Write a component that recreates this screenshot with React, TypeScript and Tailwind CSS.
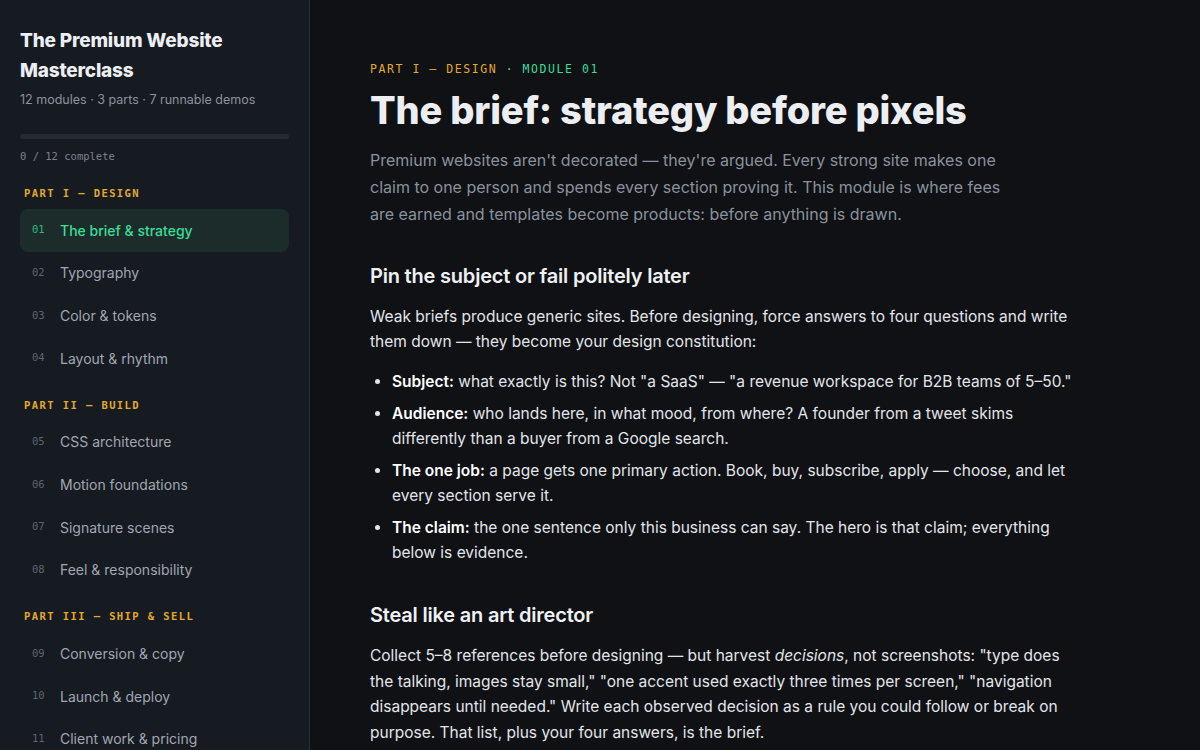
import React from "react";

const mono = "font-['DejaVu_Sans_Mono','Liberation_Mono',monospace]";
const sans = "font-['Inter','Noto_Sans',sans-serif]";

type Mod = { n: string; title: string; active?: boolean };
type Part = { label: string; mods: Mod[] };

const parts: Part[] = [
  {
    label: "PART I — DESIGN",
    mods: [
      { n: "01", title: "The brief & strategy", active: true },
      { n: "02", title: "Typography" },
      { n: "03", title: "Color & tokens" },
      { n: "04", title: "Layout & rhythm" },
    ],
  },
  {
    label: "PART II — BUILD",
    mods: [
      { n: "05", title: "CSS architecture" },
      { n: "06", title: "Motion foundations" },
      { n: "07", title: "Signature scenes" },
      { n: "08", title: "Feel & responsibility" },
    ],
  },
  {
    label: "PART III — SHIP & SELL",
    mods: [
      { n: "09", title: "Conversion & copy" },
      { n: "10", title: "Launch & deploy" },
      { n: "11", title: "Client work & pricing" },
      { n: "12", title: "Portfolio & growth" },
    ],
  },
];

function Sidebar() {
  return (
    <aside className="w-[310px] shrink-0 h-[750px] overflow-hidden bg-[#161a21] border-r border-[#2a2f37] px-5 pt-[26px]">
      <h1 className={`${sans} text-[19px] leading-[30px] font-extrabold tracking-[-0.01em] text-[#eceef2]`}>
        The Premium Website Masterclass
      </h1>
      <p className={`${sans} mt-[4px] text-[12.5px] leading-5 text-[#8d939e]`}>
        12 modules · 3 parts · 7 runnable demos
      </p>
      <div className="mt-6 h-[5px] rounded-full bg-[#252a33]" />
      <p className={`${mono} mt-[9px] text-[10.5px] leading-4 text-[#7d838e]`}>0 / 12 complete</p>
      <nav className="mt-[21px] flex flex-col">
        {parts.map((p, i) => (
          <div key={p.label} className={i === 0 ? "" : "mt-[17px]"}>
            <div className={`${mono} pl-1 text-[10.5px] leading-4 font-semibold tracking-[0.135em] text-[#e3a92b] mb-2`}>
              {p.label}
            </div>
            {p.mods.map((m) => (
              <div
                key={m.n}
                className={`h-[42.67px] flex items-center rounded-lg px-3 ${
                  m.active ? "bg-[#1b2c2b]" : ""
                }`}
              >
                <span
                  className={`${mono} w-7 text-[10.5px] ${
                    m.active ? "text-[#2fb783]" : "text-[#5f6570]"
                  }`}
                >
                  {m.n}
                </span>
                <span
                  className={`${sans} text-[14px] ${
                    m.active ? "text-[#3ddc97] font-medium" : "text-[#a1a7b1]"
                  }`}
                >
                  {m.title}
                </span>
              </div>
            ))}
          </div>
        ))}
      </nav>
    </aside>
  );
}

function Main() {
  return (
    <main className={`${sans} flex-1 h-[750px] overflow-hidden bg-[#0f1115] pl-[60px] pt-[60px]`}>
      <div className={`${mono} text-[11.5px] leading-[18px] tracking-[0.135em]`}>
        <span className="text-[#e3a92b]">PART I — DESIGN</span>
        <span className="text-[#3ddc97]"> · MODULE 01</span>
      </div>
      <h2 className="mt-[8px] text-[38px] leading-[48px] font-extrabold tracking-[-0.005em] text-[#eceef2]">
        The brief: strategy before pixels
      </h2>
      <p className="mt-[13px] max-w-[650px] text-[16px] leading-[27px] text-[#8b919c]">
        Premium websites aren't decorated — they're argued. Every strong site makes one claim to one person and
        spends every section proving it. This module is where fees are earned and templates become products: before
        anything is drawn.
      </p>

      <h3 className="mt-[34px] text-[20px] leading-7 font-semibold tracking-[-0.01em] text-[#eef0f3]">
        Pin the subject or fail politely later
      </h3>
      <p className="mt-[14px] max-w-[705px] text-[15.5px] leading-[25px] text-[#e3e5e9]">
        Weak briefs produce generic sites. Before designing, force answers to four questions and write them down —
        they become your design constitution:
      </p>
      <ul className="mt-[15px] max-w-[712px] flex flex-col gap-[7px] pl-[22px] list-disc marker:text-[#e3e5e9] text-[15.5px] leading-[25px] text-[#e3e5e9]">
        <li>
          <strong className="font-semibold text-white">Subject:</strong> what exactly is this? Not "a SaaS" — "a
          revenue workspace for B2B teams of 5–50."
        </li>
        <li>
          <strong className="font-semibold text-white">Audience:</strong> who lands here, in what mood, from where? A
          founder from a tweet skims differently than a buyer from a Google search.
        </li>
        <li>
          <strong className="font-semibold text-white">The one job:</strong> a page gets one primary action. Book,
          buy, subscribe, apply — choose, and let every section serve it.
        </li>
        <li>
          <strong className="font-semibold text-white">The claim:</strong> the one sentence only this business can
          say. The hero is that claim; everything below is evidence.
        </li>
      </ul>

      <h3 className="mt-[36px] text-[20px] leading-7 font-semibold tracking-[-0.01em] text-[#eef0f3]">
        Steal like an art director
      </h3>
      <p className="mt-[14px] max-w-[705px] text-[15.5px] leading-[25.5px] text-[#e3e5e9]">
        Collect 5–8 references before designing — but harvest <em>decisions</em>, not screenshots: "type does the
        talking, images stay small," "one accent used exactly three times per screen," "navigation disappears until
        needed." Write each observed decision as a rule you could follow or break on purpose. That list, plus your
        four answers, is the brief.
      </p>
    </main>
  );
}

export default function App() {
  return (
    <div className="flex w-[1200px] h-[750px] overflow-hidden">
      <Sidebar />
      <Main />
    </div>
  );
}
